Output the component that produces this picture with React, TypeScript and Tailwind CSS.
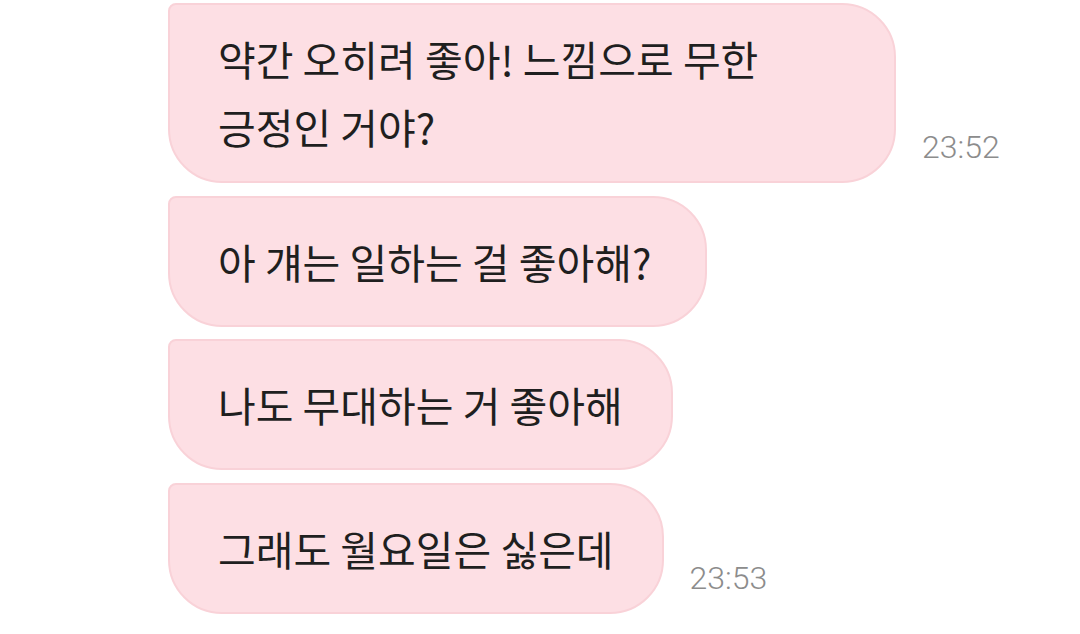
import React from "react";

const bubbleBase =
  "bg-[#fddfe4] border-2 border-[#f9d2d8] rounded-tl-[8px] rounded-tr-[54px] rounded-br-[54px] rounded-bl-[54px] px-[48px] text-[#1f1f1f] text-[41px] leading-[68px] break-keep";

const kr = { fontFamily: '"Noto Sans CJK KR", "Noto Sans", sans-serif' };
const ts = { fontFamily: 'Roboto, "Noto Sans", sans-serif' };

function Time({ t }: { t: string }) {
  return (
    <div
      className="text-[32px] leading-none font-light text-[#8c8c8c] pb-[20px] shrink-0"
      style={ts}
    >
      {t}
    </div>
  );
}

export default function App() {
  return (
    <div className="w-[1080px] h-[634px] bg-white overflow-hidden pl-[168px] pt-[3px] flex flex-col gap-[12.5px]">
      <div className="flex items-end gap-[26px]">
        <div
          className={`${bubbleBase} w-[728px] h-[180px] pt-[19px]`}
          style={kr}
        >
          약간 오히려 좋아! 느낌으로 무한 긍정인 거야?
        </div>
        <Time t="23:52" />
      </div>
      <div className="flex items-end">
        <div className={`${bubbleBase} h-[131px] py-[29px] pr-[54px]`} style={kr}>
          아 걔는 일하는 걸 좋아해?
        </div>
      </div>
      <div className="flex items-end">
        <div className={`${bubbleBase} h-[131px] py-[29px]`} style={kr}>
          나도 무대하는 거 좋아해
        </div>
      </div>
      <div className="flex items-end gap-[26px]">
        <div className={`${bubbleBase} h-[131px] py-[29px]`} style={kr}>
          그래도 월요일은 싫은데
        </div>
        <Time t="23:53" />
      </div>
    </div>
  );
}
